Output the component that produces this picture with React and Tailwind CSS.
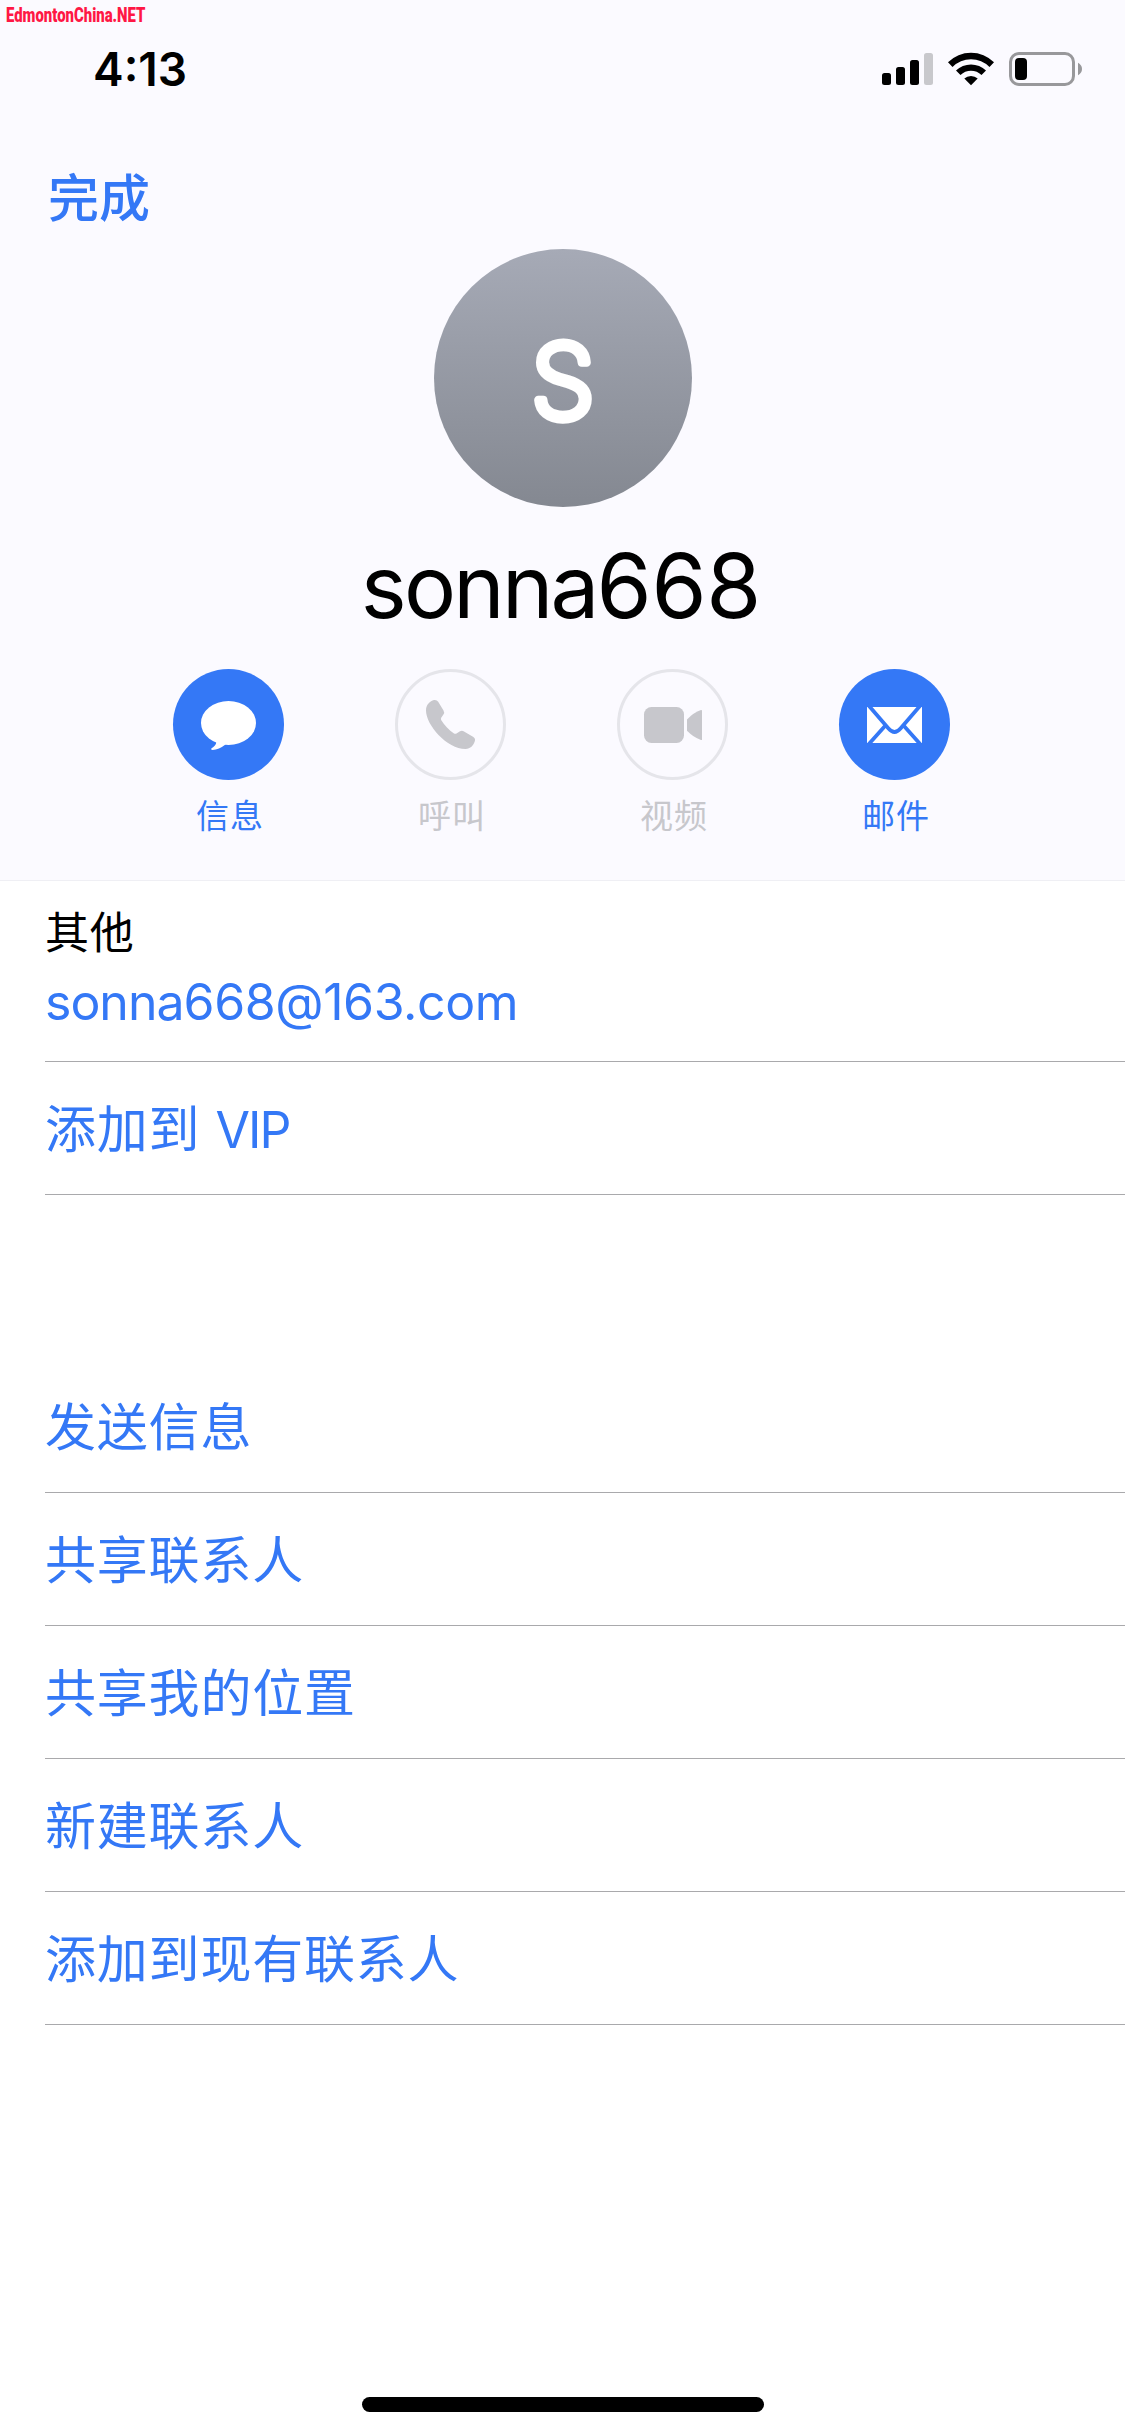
import clsx from "clsx";

// Rows shown under the contact details
const actions = [
  "发送信息",
  "共享联系人",
  "共享我的位置",
  "新建联系人",
  "添加到现有联系人",
];

const shortcuts = [
  { label: "信息", icon: MessageIcon, enabled: true },
  { label: "呼叫", icon: PhoneIcon, enabled: false },
  { label: "视频", icon: VideoIcon, enabled: false },
  { label: "邮件", icon: MailIcon, enabled: true },
];

function MessageIcon() {
  return (
    <svg viewBox="0 0 111 111" className="size-[111px]" fill="#fff">
      <ellipse cx="55.5" cy="54" rx="27.5" ry="22" />
      <path d="M42 71 L43.3 73.5 Q43 76.500 38.300 79.500 Q37.500 80.800 39.500 80.900 Q46 80.500 52.500 75.400 L54 70 Z" />
    </svg>
  );
}

function PhoneIcon() {
  return (
    <svg viewBox="0 0 111 111" className="size-[111px]" fill="#c7c7cc">
      <path d="M31 41.500 C31 35.500 35 32 39 31 Q41.800 30.600 43.200 32.800 L48.500 41.500 Q49.800 43.500 48.400 45.600 L46.200 48.800 Q45.500 50 46.300 51.200 C49.500 56.500 54 61 59 64.400 Q60.300 65.200 61.500 64.400 L65 62.300 Q67 61.300 69 62.400 L78 67.700 Q80.800 69.500 79.800 72.300 C78.400 76.500 75.500 80 70.500 80 C52 80 31 56 31 41.500 Z" />
    </svg>
  );
}

function VideoIcon() {
  return (
    <svg viewBox="0 0 111 111" className="size-[111px]" fill="#c7c7cc">
      <rect x="27" y="38" width="40" height="36" rx="7.500" />
      <path d="M70 50.500 Q76.500 43.500 84 41 Q85 40.800 85 41.500 V70.500 Q85 71.200 84 71 Q76.500 68.500 70 61.800 Z" />
    </svg>
  );
}

function MailIcon() {
  return (
    <svg viewBox="0 0 111 111" className="size-[111px]">
      <rect x="28" y="38" width="55" height="36" fill="#fff" />
      <g fill="none" stroke="#3478f6" strokeWidth="3.800">
        <path d="M28.800 35.500 L49.500 59.500 Q55.500 66.500 61.500 59.500 L82.200 35.500" />
        <path d="M29 76 L46 57 M82 76 L65 57" />
      </g>
    </svg>
  );
}

function StatusIcons() {
  return (
    <svg viewBox="0 0 201 34" className="h-[34px] w-[201px]">
      {/* Signal */}
      <rect x="0" y="21" width="9" height="12" rx="2.500" />
      <rect x="14" y="15" width="9" height="18" rx="2.500" />
      <rect x="28" y="8" width="9" height="25" rx="2.500" />
      <rect x="42" y="1" width="9" height="32" rx="2.500" fill="#c8c8cc" />
      {/* Wifi */}
      <path d="M66 10.300 A32.500 32.500 0 0 1 112 10.300 L107.500 14.900 A26 26 0 0 0 70.500 14.900 Z" />
      <path d="M74 18.500 A21.500 21.500 0 0 1 104 18.500 L99.500 23 A15 15 0 0 0 78.500 23 Z" />
      <path d="M82.300 26.500 A10 10 0 0 1 95.700 26.500 L89 33.300 Z" />
      {/* Battery */}
      <rect x="128.500" y="1.500" width="63" height="31" rx="8.500" fill="none" stroke="#98989b" strokeWidth="3" />
      <rect x="133" y="6" width="12" height="22" rx="4" />
      <path d="M196 10.800 Q200 13 200 17 Q200 21 196 23.200 Z" fill="#98989b" />
    </svg>
  );
}

function Shortcut({ label, icon: Icon, enabled }) {
  return (
    <div className="flex w-[111px] flex-col items-center">
      <div
        className={clsx(
          "flex size-[111px] items-center justify-center rounded-full",
          enabled ? "bg-[#3478f6]" : "border-3 border-[#e5e5ea]"
        )}
      >
        <div className="shrink-0">
          <Icon />
        </div>
      </div>
      <span
        className={clsx(
          "mt-[12px] pl-[3px] text-[33px] leading-[48px] tracking-[1px]",
          enabled ? "text-[#3478f6]" : "text-[#c7c7cc]"
        )}
      >
        {label}
      </span>
    </div>
  );
}

function Row({ children }) {
  return (
    <div className="flex h-[133px] items-center border-b border-[#a9a9ac] pt-[2px] text-[51px] leading-none tracking-[.8px] text-[#3478f6]">
      {children}
    </div>
  );
}

export default function App() {
  return (
    <div className="flex h-[2436px] w-[1125px] flex-col overflow-hidden bg-white font-['Inter','Noto_Sans_CJK_SC',sans-serif] text-black">
      <header className="flex h-[881px] shrink-0 flex-col border-b border-[#efeff4] bg-[#fbfaff]">
        <div className="h-[30px] pt-[3px] pl-[6px]">
          <div className="w-max origin-left scale-x-[.71] font-['Roboto',sans-serif] text-[21px] leading-[24px] font-black text-[#ff1744]">
            EdmontonChina.NET
          </div>
        </div>
        <div className="flex h-[78px] items-center justify-between pr-[42px] pl-[93px]">
          <span className="text-[46px] leading-none font-semibold">4:13</span>
          <StatusIcons />
        </div>
        <div className="flex h-[141px] pt-[62px] pl-[48px] text-[51px] leading-[58px] font-medium text-[#3478f6]">
          完成
        </div>
        <svg viewBox="0 0 258 258" className="size-[258px] self-center">
          <defs>
            <linearGradient id="avatar" x1="0" y1="0" x2="0" y2="1">
              <stop offset="0" stopColor="#a6aab6" />
              <stop offset="1" stopColor="#848891" />
            </linearGradient>
          </defs>
          <circle cx="129" cy="129" r="129" fill="url(#avatar)" />
          <text
            x="129"
            y="168.5"
            textAnchor="middle"
            fontSize="102"
            fontWeight="200"
            fill="#fff"
            stroke="#fff"
            strokeWidth="8.5"
            strokeLinejoin="round"
          >
            S
          </text>
        </svg>
        <h1 className="mt-[27px] h-[104px] pr-[3px] text-center text-[87px] leading-[104px] tracking-[-2.8px]">
          sonna<span className="text-[89px] tracking-[-0.3px]">668</span>
        </h1>
        <div className="mt-[31px] flex justify-center gap-[111px] pr-[2px]">
          {shortcuts.map((item) => (
            <Shortcut key={item.label} {...item} />
          ))}
        </div>
      </header>

      <main className="flex-1 pl-[45px]">
        <div className="h-[181px] border-b border-[#a9a9ac] pt-[22px]">
          <div className="text-[44px] leading-[60px] tracking-[.8px]">其他</div>
          <div className="pt-[9px] text-[50px] leading-[60px] tracking-[-1px] text-[#3478f6]">
            sonna<span className="tracking-[-.4px]">668@163.com</span>
          </div>
        </div>
        <Row>
          <span>
            添加到 <span className="text-[50px] tracking-[-2px]">VIP</span>
          </span>
        </Row>
        <div className="pt-[165px]">
          {actions.map((action) => (
            <Row key={action}>{action}</Row>
          ))}
        </div>
      </main>

      {/* Home indicator */}
      <div className="mb-[24px] h-[15px] w-[402px] self-center rounded-full bg-black" />
    </div>
  );
}
